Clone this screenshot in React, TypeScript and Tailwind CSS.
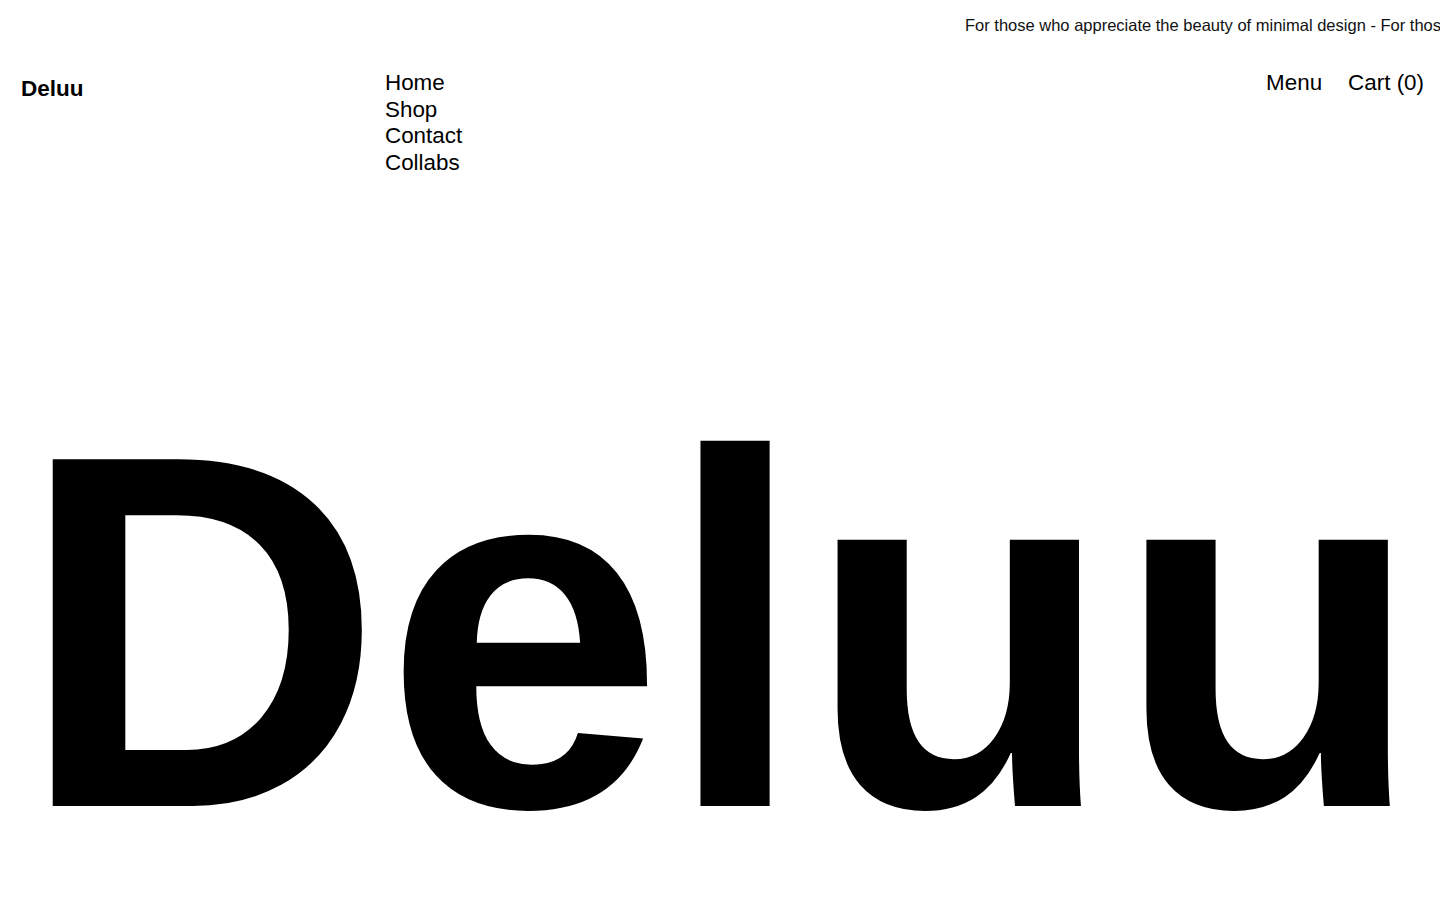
const navLinks = ['Home', 'Shop', 'Contact', 'Collabs']

const tagline = 'For those who appreciate the beauty of minimal design'

export default function App() {
  return (
    <div className="flex min-h-screen flex-col overflow-hidden bg-white font-['Liberation_Sans',Arial,sans-serif] text-black">
      {/* Top marquee strip — text runs off the right edge */}
      <div className="overflow-hidden pt-[13px] pb-[11px]">
        <p className="whitespace-nowrap pl-[965px] text-[16.5px] leading-6 text-[#111]">
          {tagline} - {tagline} - {tagline}
        </p>
      </div>

      {/* Header: logo, nav list, menu + cart */}
      <header className="mt-[22px] flex items-start px-5">
        <div className="w-[365px] shrink-0 pt-[5px] pl-px">
          <a href="#" className="text-[22.5px] font-bold leading-[28px]">
            Deluu
          </a>
        </div>
        <nav className="flex flex-1 flex-col text-[22.4px] leading-[26.67px]">
          {navLinks.map((link) => (
            <a key={link} href="#" className="w-fit">
              {link}
            </a>
          ))}
        </nav>
        <div className="flex items-start gap-[26px] text-[22.4px] leading-[26.67px]">
          <button className="cursor-pointer">Menu</button>
          <button className="-mr-1 cursor-pointer">Cart (0)</button>
        </div>
      </header>

      {/* Hero wordmark */}
      <div className="mt-auto pb-[16px] pl-[19px]">
        <h1 className="whitespace-nowrap text-[504px] font-bold leading-none tracking-[1px]">Deluu</h1>
      </div>
    </div>
  )
}
